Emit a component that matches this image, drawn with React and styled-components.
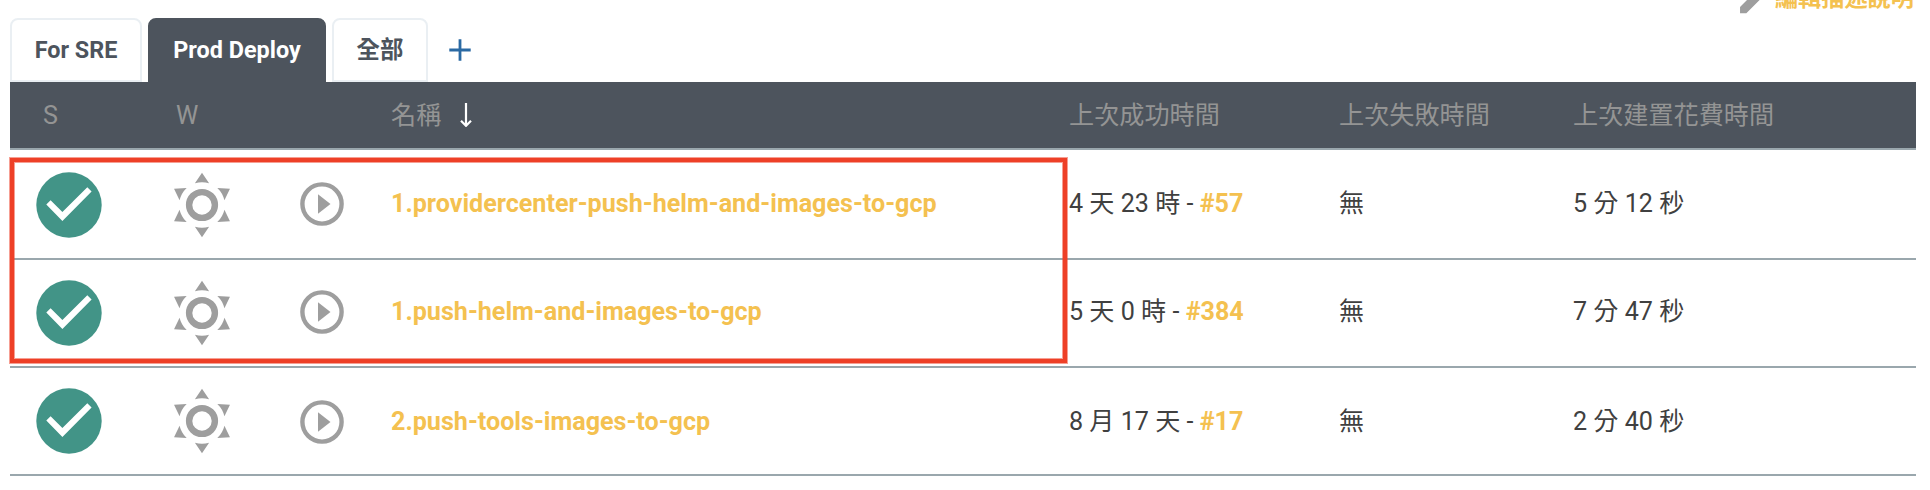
import React from "react";
import styled, { createGlobalStyle } from "styled-components";

const GlobalStyle = createGlobalStyle`
  *, *::before, *::after { box-sizing: border-box; }
  body {
    margin: 0;
    background: #fff;
    color: #404040;
    font-family: Roboto, "Noto Sans CJK TC", sans-serif;
    font-size: 25.14px;
    overflow: hidden;
  }
`;

const Page = styled.main`
  width: 1930px;
  height: 490px;
  padding: 0 14px 0 10px;
  overflow: hidden;
`;

const ActionBar = styled.div`
  display: flex;
  justify-content: flex-end;
  align-items: flex-end;
  height: 18px;
  padding: 0 2px 5px 0;
  overflow: hidden;
`;

const EditLink = styled.a`
  display: flex;
  align-items: flex-end;
  flex: none;
  color: #f4c150;
  font-size: 23.2px;
  font-weight: 700;
  line-height: 28px;

  svg { margin-bottom: -5px; }
  span { margin-bottom: 1px; }
`;

const TabBar = styled.nav`
  display: flex;
  gap: 6px;
  height: 64px;
`;

const Tab = styled.a`
  display: flex;
  align-items: center;
  justify-content: center;
  width: ${(p) => p.$width}px;
  border: 2px solid ${(p) => (p.$active ? "#4d545d" : "#eaeff3")};
  border-radius: 8px 8px 0 0;
  background: ${(p) => (p.$active ? "#4d545d" : "#fff")};
  color: ${(p) => (p.$active ? "#fff" : "#4d545d")};
  font-size: 23.4px;
  font-weight: 700;
  line-height: 28px;
`;

const NewTab = styled.a`
  display: flex;
  align-items: center;
  padding-left: 15px;
`;

const Table = styled.section`
  position: relative;
`;

const Row = styled.div`
  display: grid;
  grid-template-columns: 133px 140px 108px 678px 270px 234px 1fr;
  align-items: center;
  height: 108px;
  border-bottom: 2px solid #9aa7ad;
`;

const HeaderRow = styled(Row)`
  height: 68px;
  margin-bottom: 2px;
  background: #4d545d;
  color: #949494;
`;

const HeaderCell = styled.div`
  display: flex;
  align-items: center;
  gap: 19px;
  padding-top: 2px;
  padding-left: ${(p) => p.$indent || 0}px;
  line-height: 36px;
  white-space: nowrap;

  svg { margin-bottom: 2px; }
`;

const IconCell = styled.div`
  display: flex;
  padding-left: ${(p) => p.$indent}px;
  padding-top: ${(p) => p.$drop || 0}px;
  padding-bottom: ${(p) => p.$rise || 0}px;
`;

const Cell = styled.div`
  padding-top: ${(p) => p.$drop || 0}px;
  padding-bottom: ${(p) => p.$rise || 0}px;
  line-height: 36px;
  white-space: nowrap;
`;

const Link = styled.a`
  color: #f4c150;
  font-weight: 700;
`;

const Highlight = styled.div`
  position: absolute;
  top: 76px;
  left: 0;
  width: 1057px;
  height: 205px;
  border: 4px solid #ee4027;
  box-shadow: 0 0 0 1px rgba(238, 64, 39, 0.5), inset 0 0 0 1px rgba(238, 64, 39, 0.5);
  pointer-events: none;
`;

const PencilIcon = () => (
  <svg width="40.3" height="40.3" viewBox="0 0 24 24" fill="#9e9e9e">
    <path d="M3 17.25V21h3.75L17.81 9.94l-3.75-3.75L3 17.25zM20.71 7.04a1 1 0 0 0 0-1.41l-2.34-2.34a1 1 0 0 0-1.41 0l-1.83 1.83 3.75 3.75 1.83-1.83z" />
  </svg>
);

const PlusIcon = () => (
  <svg width="22" height="22" viewBox="0 0 22 22" stroke="#2a69a3" strokeWidth="2.8">
    <path d="M11 0.3V21.7M0.3 11H21.7" />
  </svg>
);

const SortIcon = () => (
  <svg width="12" height="24" viewBox="0 0 12 24" fill="none" stroke="#fff" strokeWidth="2.2">
    <path d="M6 0V22.5M1 17.8L6 22.8L11 17.8" />
  </svg>
);

const SuccessIcon = () => (
  <svg width="66" height="66" viewBox="-33 -33 66 66">
    <circle r="32.7" fill="#429487" />
    <path d="M-22.7 -0.4L-18.4 -4.7L-6.6 7L18.3 -17.7L22.6 -13.5L-6.6 16Z" fill="#fff" />
  </svg>
);

const SunIcon = () => (
  <svg width="66" height="66" viewBox="-33 -33 66 66" fill="#9e9e9e">
    <circle r="12.9" fill="none" stroke="#9e9e9e" strokeWidth="6.4" />
    {[0, 60, 120, 180, 240, 300].map((angle) => (
      <path key={angle} d="M0 -32.3L7.1 -21.8Q0 -23.9 -7.1 -21.8Z" transform={`rotate(${angle})`} />
    ))}
  </svg>
);

const PlayIcon = () => (
  <svg width="44" height="44" viewBox="-22 -22 44 44" fill="#9e9e9e">
    <circle r="19.6" fill="none" stroke="#9e9e9e" strokeWidth="4.4" />
    <path d="M-4 -9.7L8.5 0L-4 9.7Z" />
  </svg>
);

const jobs = [
  { name: "1.providercenter-push-helm-and-images-to-gcp", success: "4 天 23 時", build: "#57", duration: "5 分 12 秒", rise: 2, drop: 0 },
  { name: "1.push-helm-and-images-to-gcp", success: "5 天 0 時", build: "#384", duration: "7 分 47 秒", rise: 2, drop: 0 },
  { name: "2.push-tools-images-to-gcp", success: "8 月 17 天", build: "#17", duration: "2 分 40 秒", rise: 0, drop: 2 },
];

function JobRow({ job }) {
  const shift = { $rise: job.rise, $drop: job.drop };
  return (
    <Row>
      <IconCell $indent={26}><SuccessIcon /></IconCell>
      <IconCell $indent={26}><SunIcon /></IconCell>
      <IconCell $indent={17} {...shift}><PlayIcon /></IconCell>
      <Cell {...shift}><Link>{job.name}</Link></Cell>
      <Cell {...shift}>{job.success} - <Link>{job.build}</Link></Cell>
      <Cell {...shift}>無</Cell>
      <Cell {...shift}>{job.duration}</Cell>
    </Row>
  );
}

export default function App() {
  return (
    <>
      <GlobalStyle />
      <Page>
        <ActionBar>
          <EditLink><PencilIcon /><span>編輯描述說明</span></EditLink>
        </ActionBar>
        <TabBar>
          <Tab $width={132}>For SRE</Tab>
          <Tab $width={178} $active>Prod Deploy</Tab>
          <Tab $width={96}>全部</Tab>
          <NewTab><PlusIcon /></NewTab>
        </TabBar>
        <Table>
          <HeaderRow>
            <HeaderCell $indent={33}>S</HeaderCell>
            <HeaderCell $indent={33}>W</HeaderCell>
            <HeaderCell />
            <HeaderCell>名稱<SortIcon /></HeaderCell>
            <HeaderCell>上次成功時間</HeaderCell>
            <HeaderCell>上次失敗時間</HeaderCell>
            <HeaderCell>上次建置花費時間</HeaderCell>
          </HeaderRow>
          {jobs.map((job) => <JobRow key={job.name} job={job} />)}
          <Highlight />
        </Table>
      </Page>
    </>
  );
}
